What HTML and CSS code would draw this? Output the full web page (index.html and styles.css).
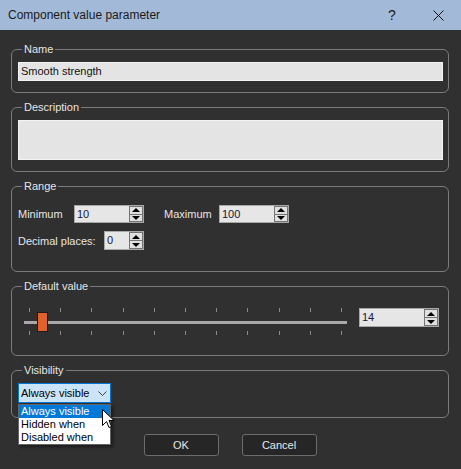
FILE: index.html
```html
<!DOCTYPE html>
<html lang="en">
<head>
    <meta charset="UTF-8">
    <meta name="viewport" content="width=device-width, initial-scale=1.0">
    <title>Component value parameter</title>
    <link rel="stylesheet" href="styles.css">
</head>
<body>
    <header class="titlebar">
        <span class="title">Component value parameter</span>
        <span class="title-btn help">?</span>
        <span class="title-btn">
            <svg width="11" height="11" viewBox="0 0 11 11"><path d="M0.5 0.5 L10.5 10.5 M10.5 0.5 L0.5 10.5" stroke="#111" stroke-width="1" fill="none"/></svg>
        </span>
    </header>

    <main class="content">
        <fieldset class="group">
            <legend>Name</legend>
            <div class="field">Smooth strength</div>
        </fieldset>

        <fieldset class="group">
            <legend>Description</legend>
            <div class="field multiline"></div>
        </fieldset>

        <fieldset class="group">
            <legend>Range</legend>
            <div class="range-rows">
                <div class="row">
                    <span class="row-label label-min">Minimum</span>
                    <div class="spin spin-wide">
                        <span class="spin-text">10</span>
                        <span class="spin-buttons"><span class="spin-up"><i></i></span><span class="spin-down"><i></i></span></span>
                    </div>
                    <span class="row-label label-max">Maximum</span>
                    <div class="spin spin-wide">
                        <span class="spin-text">100</span>
                        <span class="spin-buttons"><span class="spin-up"><i></i></span><span class="spin-down"><i></i></span></span>
                    </div>
                </div>
                <div class="row">
                    <span class="row-label label-dec">Decimal places:</span>
                    <div class="spin spin-narrow">
                        <span class="spin-text">0</span>
                        <span class="spin-buttons"><span class="spin-up"><i></i></span><span class="spin-down"><i></i></span></span>
                    </div>
                </div>
            </div>
        </fieldset>

        <fieldset class="group">
            <legend>Default value</legend>
            <div class="default-row">
                <div class="slider">
                    <div class="ticks"><i></i><i></i><i></i><i></i><i></i><i></i><i></i><i></i><i></i><i></i><i></i></div>
                    <div class="track"></div>
                    <div class="ticks"><i></i><i></i><i></i><i></i><i></i><i></i><i></i><i></i><i></i><i></i><i></i></div>
                    <span class="thumb" style="left: 13px"></span>
                </div>
                <div class="spin spin-value">
                    <span class="spin-text">14</span>
                    <span class="spin-buttons"><span class="spin-up"><i></i></span><span class="spin-down"><i></i></span></span>
                </div>
            </div>
        </fieldset>

        <fieldset class="group">
            <legend>Visibility</legend>
            <div class="combo-wrap">
                <div class="combo">
                    <span>Always visible</span>
                    <svg width="9" height="5" viewBox="0 0 9 5"><path d="M0.5 0.5 L4.5 4.5 L8.5 0.5" stroke="#3c3c3c" stroke-width="1" fill="none"/></svg>
                </div>
                <ul class="dropdown">
                    <li class="selected">Always visible</li>
                    <li>Hidden when</li>
                    <li>Disabled when</li>
                </ul>
                <svg class="cursor" width="13" height="20" viewBox="0 0 13 20"><path d="M0.5 0.5 L0.5 16.5 L4.5 12.5 L7 18.5 L9.5 17.5 L7 11.5 L12 11.5 Z" fill="#fff" stroke="#000" stroke-width="1" stroke-linejoin="round"/></svg>
            </div>
        </fieldset>

        <div class="buttons">
            <button class="btn">OK</button>
            <button class="btn">Cancel</button>
        </div>
    </main>
</body>
</html>
```

FILE: styles.css
```css
body {
    margin: 0;
    background-color: #303030;
    font-family: "Liberation Sans", Arial, sans-serif;
    font-size: 11px;
    color: #e4e4e4;
}
.titlebar {
    display: flex;
    align-items: center;
    height: 30px;
    padding-left: 8px;
    background-color: #a2bad7;
    color: #1a1a1a;
    font-size: 12px;
}
.title {
    flex: 1;
}
.title-btn {
    display: flex;
    align-items: center;
    justify-content: center;
    width: 46px;
    height: 30px;
}
.help {
    font-size: 14px;
}
.content {
    padding: 12px 12px 0 11px;
}
.group {
    margin: 0;
    padding: 6px 5px 11px 6px;
    border: 1px solid #7b7b7b;
    border-radius: 6px;
    min-width: 0;
}
.group + .group {
    margin-top: 7px;
}
.group legend {
    margin-left: 4px;
    padding: 0 2px;
    line-height: 14px;
    color: #e6e6e6;
}
.field {
    box-sizing: border-box;
    height: 19px;
    padding: 0 2px;
    line-height: 17px;
    background-color: #e4e4e4;
    border: 1px solid #f4f4f4;
    color: #111;
}
.field.multiline {
    height: 40px;
}
.range-rows {
    display: flex;
    flex-direction: column;
    gap: 8px;
    padding: 6px 0 10px;
}
.row {
    display: flex;
    align-items: center;
}
.row-label {
    color: #e6e6e6;
}
.label-min {
    width: 56px;
}
.label-max {
    width: 55px;
    margin-left: 20px;
}
.label-dec {
    width: 86px;
}
.spin {
    display: flex;
    box-sizing: border-box;
    height: 18px;
    border: 1px solid #a8a8a8;
    background-color: #e6e6e6;
    color: #16163c;
}
.spin-wide {
    width: 70px;
}
.spin-narrow {
    width: 40px;
    height: 19px;
}
.spin-text {
    flex: 1;
    padding-left: 2px;
    line-height: 16px;
}
.spin-buttons {
    display: flex;
    flex-direction: column;
    width: 14px;
}
.spin-up, .spin-down {
    flex: 1;
    display: flex;
    align-items: center;
    justify-content: center;
    background-color: #e0e0e0;
    border: 1px solid #747474;
}
.spin-up + .spin-down {
    border-top: 0;
}
.spin-up i, .spin-down i {
    width: 0;
    height: 0;
    border-left: 4px solid transparent;
    border-right: 4px solid transparent;
}
.spin-up i {
    border-bottom: 4px solid #000;
}
.spin-down i {
    border-top: 4px solid #000;
}
.default-row {
    display: flex;
    align-items: flex-start;
    gap: 12px;
    padding: 9px 4px 9px 6px;
}
.slider {
    position: relative;
    width: 323px;
}
.ticks {
    display: flex;
    justify-content: space-between;
    height: 4px;
    padding: 0 5px;
}
.ticks i {
    width: 1px;
    background-color: #8a8a8a;
}
.track {
    height: 3px;
    margin: 9px 0 7px;
    background-color: #a9a9a9;
}
.thumb {
    position: absolute;
    top: 4px;
    box-sizing: border-box;
    width: 11px;
    height: 20px;
    background-color: #e2602a;
    border: 1px solid #1c1c1c;
}
.spin-value {
    width: 80px;
    height: 19px;
}
.combo-wrap {
    position: relative;
    width: 93px;
    margin-bottom: 3px;
}
.combo {
    display: flex;
    align-items: center;
    justify-content: space-between;
    box-sizing: border-box;
    height: 20px;
    padding: 0 3px 0 2px;
    background-color: #cce4f7;
    border: 1px solid #0078d7;
    color: #000;
}
.dropdown {
    position: absolute;
    left: 0;
    top: 21px;
    z-index: 2;
    box-sizing: border-box;
    width: 93px;
    margin: 0;
    padding: 0;
    list-style: none;
    background-color: #fff;
    border: 1px solid #646464;
    box-shadow: 2px 2px 3px rgba(0, 0, 0, 0.45);
    color: #000;
}
.dropdown li {
    padding-left: 2px;
    line-height: 13px;
}
.dropdown .selected {
    background-color: #0078d7;
    color: #fff;
}
.cursor {
    position: absolute;
    left: 84px;
    top: 26px;
    z-index: 3;
}
.buttons {
    display: flex;
    justify-content: center;
    gap: 23px;
    margin-top: 16px;
}
.btn {
    width: 75px;
    height: 22px;
    padding: 0;
    background-color: #262626;
    border: 1px solid #6c6c6c;
    border-radius: 3px;
    color: #e8e8e8;
    font-family: "Liberation Sans", Arial, sans-serif;
    font-size: 11px;
}
```
